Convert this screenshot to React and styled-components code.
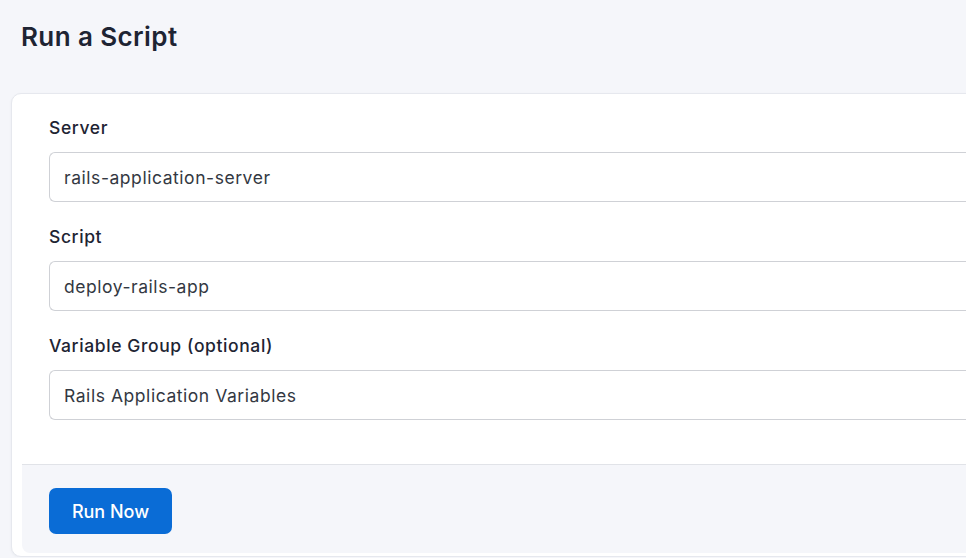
import React from "react";
import styled, { createGlobalStyle } from "styled-components";

const GlobalStyle = createGlobalStyle`
  html, body {
    margin: 0;
    padding: 0;
    background: #f5f6fa;
    overflow: hidden;
  }
  body {
    font-family: "Inter", "Noto Sans", sans-serif;
    color: #1e2433;
  }
`;

const Page = styled.div`
  width: 1000px;
  padding: 18px 0 0 11px;
  box-sizing: border-box;
`;

const Title = styled.h1`
  margin: 0 0 0 10px;
  font-size: 26px;
  line-height: 38px;
  font-weight: 600;
  color: #1e2433;
  letter-spacing: 0.4px;
`;

const Card = styled.div`
  margin-top: 37px;
  background: #fff;
  border: 1px solid #e6e8ee;
  border-radius: 10px;
  box-shadow: 0 1px 3px rgba(20, 30, 60, 0.05);
  padding: 0 0 3px 10px;
`;

const Body = styled.div`
  padding: 22px 0 44px 27px;
  display: flex;
  flex-direction: column;
  gap: 23px;
`;

const Field = styled.div`
  display: flex;
  flex-direction: column;
  gap: 12px;
`;

const Label = styled.label`
  font-size: 17.5px;
  line-height: 24px;
  font-weight: 500;
  letter-spacing: 0.6px;
  color: #1e2433;
`;

const Input = styled.div`
  height: 50px;
  box-sizing: border-box;
  border: 1px solid #cfd1d6;
  border-right: none;
  border-radius: 6px 0 0 6px;
  padding: 0 14px;
  display: flex;
  align-items: center;
  font-size: 17.5px;
  letter-spacing: 0.55px;
  color: #333842;
`;

const Footer = styled.div`
  background: #f5f6fa;
  border-top: 1px solid #e1e3e8;
  border-bottom-left-radius: 8px;
  padding: 23px 0 19px 27px;
`;

const Button = styled.button`
  display: block;
  height: 46px;
  width: 123px;
  border: none;
  border-radius: 7px;
  background: #0a6cd6;
  color: #fff;
  font-family: "Inter", "Noto Sans", sans-serif;
  font-size: 18px;
  font-weight: 500;
  cursor: pointer;
`;

const fields = [
  { label: "Server", value: "rails-application-server" },
  { label: "Script", value: "deploy-rails-app" },
  { label: "Variable Group (optional)", value: "Rails Application Variables" },
];

const App = () => {
  return (
    <React.Fragment>
      <GlobalStyle />
      <Page>
        <Title>Run a Script</Title>
        <Card>
          <Body>
            {fields.map((f) => (
              <Field key={f.label}>
                <Label>{f.label}</Label>
                <Input>{f.value}</Input>
              </Field>
            ))}
          </Body>
          <Footer>
            <Button>Run Now</Button>
          </Footer>
        </Card>
      </Page>
    </React.Fragment>
  );
};

export default App;
